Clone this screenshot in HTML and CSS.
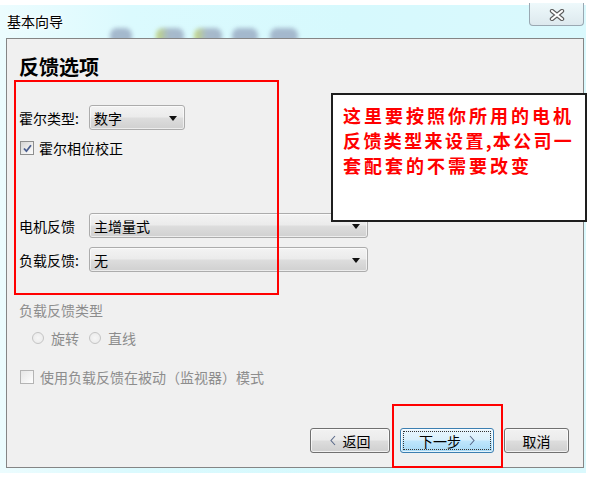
FILE: index.html
```html
<!DOCTYPE html>
<html lang="zh-CN">
<head>
<meta charset="utf-8">
<title>基本向导</title>
<link rel="stylesheet" href="styles.css">
</head>
<body>
<div class="window">
  <div class="titlebar">
    <div class="glass">
      <span class="blob b1"></span>
      <span class="blob b2"></span>
      <span class="blob b3"></span>
      <span class="blob b4"></span>
      <span class="blob b5"></span>
    </div>
    <span class="title">基本向导</span>
    <div class="close">
      <svg width="16" height="12" viewBox="0 0 16 12">
        <path d="M3 2 L13 10 M13 2 L3 10" stroke="#5c5c5c" stroke-width="4.4" stroke-linecap="round" fill="none"/>
        <path d="M3 2 L13 10 M13 2 L3 10" stroke="#ffffff" stroke-width="2.2" stroke-linecap="round" fill="none"/>
      </svg>
    </div>
  </div>

  <div class="panel">
    <h1 class="heading">反馈选项</h1>

    <div class="row row-hall">
      <span class="label">霍尔类型:</span>
      <div class="combo combo-short"><span class="combo-text">数字</span><span class="arrow"></span></div>
    </div>

    <div class="check-row check-hall">
      <span class="checkbox">
        <svg width="13" height="13" viewBox="0 0 13 13">
          <path d="M3 6.5 L5.4 9.2 L10 3.2" stroke="#4a5e8e" stroke-width="1.8" fill="none"/>
        </svg>
      </span>
      <span>霍尔相位校正</span>
    </div>

    <div class="row row-motor">
      <span class="label">电机反馈</span>
      <div class="combo combo-long"><span class="combo-text">主增量式</span><span class="arrow"></span></div>
    </div>

    <div class="row row-load">
      <span class="label">负载反馈:</span>
      <div class="combo combo-long"><span class="combo-text">无</span><span class="arrow"></span></div>
    </div>

    <div class="section-label disabled">负载反馈类型</div>

    <div class="radio-row disabled">
      <span class="radio"></span><span class="radio-text">旋转</span>
      <span class="radio"></span><span class="radio-text">直线</span>
    </div>

    <div class="check-row check-passive disabled">
      <span class="checkbox checkbox-off"></span>
      <span>使用负载反馈在被动（监视器）模式</span>
    </div>

    <div class="buttons">
      <div class="btn btn-back">
        <svg class="chev" width="6" height="11" viewBox="0 0 6 11"><path d="M5 1 L1 5.5 L5 10" stroke="#5a6a8a" stroke-width="1.1" fill="none"/></svg>
        <span>返回</span>
      </div>
      <div class="btn btn-next">
        <span class="focus"></span>
        <span>下一步</span>
        <svg class="chev" width="6" height="11" viewBox="0 0 6 11"><path d="M1 1 L5 5.5 L1 10" stroke="#5a6a8a" stroke-width="1.1" fill="none"/></svg>
      </div>
      <div class="btn btn-cancel"><span>取消</span></div>
    </div>
  </div>

  <div class="mark mark-form"></div>
  <div class="mark mark-next"></div>
  <div class="note">这里要按照你所用的电机<br><span class="tight">反馈类型来设置<span class="comma">,</span>本公司一</span><br>套配套的不需要改变</div>
</div>
</body>
</html>
```

FILE: styles.css
```css
html, body {
  margin: 0;
  background: #ffffff;
}

body {
  font-family: "Noto Sans CJK SC", "Noto Sans", sans-serif;
  font-size: 14px;
  color: #000000;
  padding-top: 5px;
}

.window {
  position: relative;
  width: 586px;
  height: 468px;
  background: linear-gradient(to right, #ecfcfe 0, #dbfafe 22%, #d6f9fd 60%, #daf9fd 100%);
  display: flex;
  flex-direction: column;
}

/* ---------- title bar ---------- */
.titlebar {
  position: relative;
  height: 33px;
  display: flex;
  align-items: flex-start;
  padding-left: 7px;
  flex-shrink: 0;
}

.glass {
  position: absolute;
  inset: 0;
  overflow: hidden;
}

.blob {
  position: absolute;
  top: 23px;
  height: 16px;
  border-radius: 7px;
  filter: blur(2px);
  background: #9fb2c8;
  opacity: 0.9;
}

.b1 { left: 110px; width: 22px; }
.b2 { left: 156px; width: 28px; background: linear-gradient(to right, #c0d370 0, #a2b4c6 45%, #a0b3c8 100%); }
.b3 { left: 194px; width: 28px; background: linear-gradient(to right, #c4d572 0, #a2b4c6 45%, #9fb1c6 100%); }
.b4 { left: 232px; width: 26px; }
.b5 { left: 270px; width: 28px; }

.title {
  position: relative;
  margin-top: 6px;
  font-size: 14px;
  line-height: 20px;
  color: #000;
  text-shadow: 0 0 6px #ffffff, 0 0 3px #ffffff;
}

.close {
  position: relative;
  margin-left: auto;
  margin-right: 2px;
  margin-top: -2px;
  width: 55px;
  height: 23px;
  box-sizing: border-box;
  border: 1px solid #9aa8b2;
  border-top: none;
  border-radius: 0 0 4px 4px;
  background: linear-gradient(#eef9fb, #dde9ee);
  display: flex;
  align-items: center;
  justify-content: center;
  padding-top: 1px;
}

/* ---------- panel ---------- */
.panel {
  margin-left: 6px;
  width: 578px;
  height: 430px;
  box-sizing: border-box;
  border: 1px solid #858585;
  background: #f0f0f0;
  padding: 16px 12px 0 12px;
  display: flex;
  flex-direction: column;
}

.heading {
  margin: 0;
  font-size: 20px;
  line-height: 24px;
  font-weight: bold;
  color: #000;
}

.row {
  display: flex;
  align-items: center;
  height: 25px;
}

.row-hall { margin-top: 26px; }
.row-motor { margin-top: 55px; }
.row-load { margin-top: 9px; }

.label {
  width: 70px;
  flex-shrink: 0;
  line-height: 20px;
}

.combo {
  position: relative;
  height: 25px;
  box-sizing: border-box;
  border: 1px solid #acacac;
  border-radius: 3px;
  background: linear-gradient(#f3f3f3 0, #ebebeb 48%, #dddddd 52%, #d0d0d0 100%);
  display: flex;
  align-items: center;
  padding-left: 4px;
  box-shadow: inset 0 0 0 1px rgba(255,255,255,0.6);
}

.combo-short { width: 96px; }
.combo-long { width: 279px; }

.combo-text {
  flex: 1;
  line-height: 20px;
}

.arrow {
  width: 0;
  height: 0;
  border-left: 4px solid transparent;
  border-right: 4px solid transparent;
  border-top: 5px solid #111;
  margin-right: 7px;
  margin-top: 1px;
}

.check-row {
  display: flex;
  align-items: center;
  height: 20px;
  line-height: 20px;
}

.check-hall { margin-top: 8px; }
.check-hall .checkbox { margin-right: 5px; }

.check-passive { margin-top: 19px; }
.check-passive .checkbox { margin-right: 6px; }

.checkbox {
  width: 14px;
  height: 14px;
  margin-left: 1px;
  box-sizing: border-box;
  border: 1px solid #8e8f8f;
  background: linear-gradient(135deg, #d4d4d4 0, #efefef 60%, #fbfbfb 100%);
  display: flex;
  align-items: center;
  justify-content: center;
  flex-shrink: 0;
  position: relative;
}

.checkbox svg {
  position: absolute;
  left: -0.5px;
  top: -0.5px;
}

.checkbox-off {
  border-color: #b4b4b4;
  background: linear-gradient(135deg, #e6e6e6 0, #f4f4f4 60%, #ffffff 100%);
}

.disabled {
  color: #8d8d8d;
}

.section-label {
  margin-top: 28px;
  line-height: 20px;
}

.radio-row {
  margin-top: 8px;
  height: 20px;
  display: flex;
  align-items: center;
  padding-left: 13px;
  line-height: 20px;
}

.radio {
  width: 12px;
  height: 12px;
  box-sizing: border-box;
  border-radius: 50%;
  border: 1px solid #c4c4c4;
  background: radial-gradient(circle at 50% 50%, #f6f6f6 0, #e8e8e8 100%);
  margin-right: 7px;
  flex-shrink: 0;
}

.radio-text { margin-right: 10px; }

/* ---------- buttons ---------- */
.buttons {
  margin-top: 41px;
  display: flex;
  justify-content: flex-end;
  gap: 10px;
  margin-right: 2px;
}

.btn {
  position: relative;
  height: 25px;
  box-sizing: border-box;
  border: 1px solid #707070;
  border-radius: 3px;
  background: linear-gradient(#f2f2f2 0, #ebebeb 48%, #dddddd 52%, #cfcfcf 100%);
  box-shadow: inset 0 0 0 1px rgba(255,255,255,0.7);
  display: flex;
  align-items: center;
  justify-content: center;
  gap: 7px;
  line-height: 20px;
}

.btn-back { width: 80px; }
.btn-next {
  width: 94px;
  border-color: #3c7fb1;
  background: linear-gradient(#eaf6fd 0, #d9f0fc 48%, #bee6fd 52%, #a7d9f5 100%);
  gap: 8px;
}
.btn-cancel { width: 65px; }

.focus {
  position: absolute;
  inset: 2px;
  border: 1px dotted #333;
}

.chev { display: block; }

/* ---------- annotations ---------- */
.mark {
  position: absolute;
  box-sizing: border-box;
  border: 2px solid #ff0000;
}

.mark-form {
  left: 14px;
  top: 75px;
  width: 265px;
  height: 215px;
}

.mark-next {
  left: 392px;
  top: 399px;
  width: 111px;
  height: 64px;
}

.note {
  position: absolute;
  left: 331px;
  top: 88px;
  width: 256px;
  height: 129px;
  box-sizing: border-box;
  border: 2px solid #1e1e1e;
  background: #ffffff;
  padding: 8px 0 0 10px;
  color: #ff0000;
  font-weight: bold;
  font-size: 18px;
  line-height: 25px;
  letter-spacing: 3px;
  white-space: nowrap;
}

.tight {
  letter-spacing: 2.4px;
}

.comma {
  letter-spacing: 1px;
}
```
